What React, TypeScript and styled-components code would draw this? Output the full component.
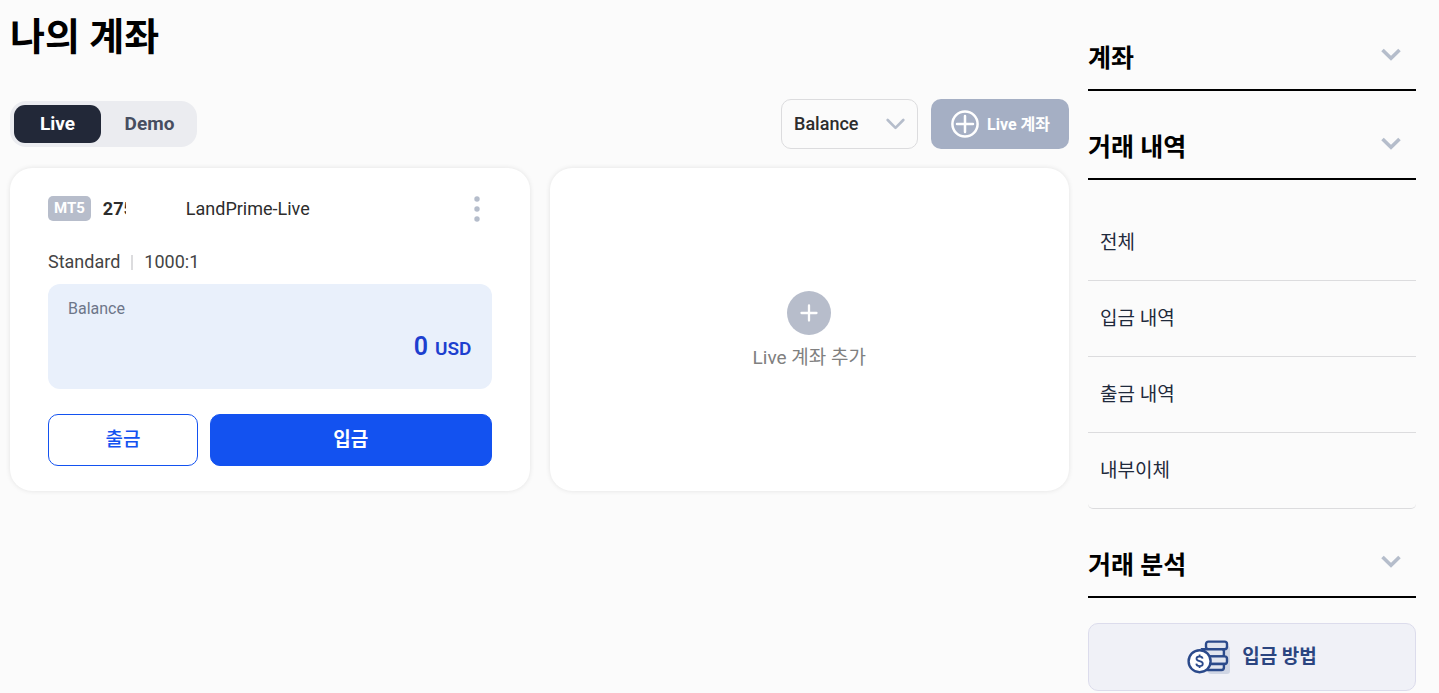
import React, { useState } from "react";
import styled, { createGlobalStyle } from "styled-components";

const GlobalStyle = createGlobalStyle`
  *, *::before, *::after { box-sizing: border-box; }
  body {
    margin: 0;
    background: #fbfbfb;
    color: #2d2d2d;
    font-family: Roboto, "Noto Sans CJK KR", sans-serif;
    font-size: 18px;
    line-height: 24px;
  }
  button, select { font-family: inherit; cursor: pointer; }
  svg { display: block; flex: none; }
`;

const Page = styled.div`
  display: grid;
  grid-template-columns: minmax(0, 1fr) 328px;
  column-gap: 19px;
  padding: 0 23px 0 10px;
`;

const Title = styled.h1`
  margin: 0;
  padding: 9px 0 34px;
  color: #000;
  font-size: 38px;
  font-weight: 700;
  line-height: 56px;
`;

const Toolbar = styled.div`
  display: flex;
  align-items: center;
  gap: 13px;
  margin-bottom: 19px;
`;

const Tabs = styled.div`
  display: flex;
  gap: 5px;
  margin-right: auto;
  padding: 4px;
  border-radius: 16px;
  background: #ebecf0;
`;

const Tab = styled.button<{ $active: boolean }>`
  width: 87px;
  height: 38px;
  padding: 0 0 2px;
  border: 0;
  border-radius: 11px;
  background: ${({ $active }) => ($active ? "#222838" : "transparent")};
  color: ${({ $active }) => ($active ? "#fff" : "#474e60")};
  font-size: 19px;
  font-weight: 700;
`;

const SelectBox = styled.div`
  position: relative;
  width: 137px;

  svg {
    position: absolute;
    top: 19px;
    right: 13px;
    pointer-events: none;
  }
`;

const Select = styled.select`
  width: 100%;
  height: 50px;
  padding: 0 40px 2px 12px;
  border: 1px solid #dcdcde;
  border-radius: 10px;
  background: transparent;
  color: #2d2d2d;
  font-size: 18px;
  font-weight: 500;
  appearance: none;
`;

const CreateButton = styled.button`
  display: flex;
  align-items: center;
  gap: 8px;
  height: 50px;
  padding: 0 19px 0 20px;
  border: 0;
  border-radius: 10px;
  background: #a5afc4;
  color: #fff;
  font-size: 16px;
  font-weight: 700;

  span { padding-bottom: 2px; }
`;

const Cards = styled.div`
  display: grid;
  grid-template-columns: repeat(2, minmax(0, 1fr));
  gap: 20px;
`;

const Card = styled.article`
  padding: 28px 38px 25px;
  border-radius: 22px;
  background: #fff;
  box-shadow: 0 0 5px rgba(0, 0, 0, 0.1);
`;

const AccountRow = styled.div`
  display: flex;
  align-items: center;
  height: 25px;
`;

const Platform = styled.span`
  margin-right: 12px;
  padding: 0 6px;
  border-radius: 5px;
  background: #b7bdcb;
  color: #fff;
  font-size: 15px;
  font-weight: 700;
  line-height: 25px;
`;

const AccountNumber = styled.strong`
  width: 23px;
  margin-right: 60px;
  overflow: hidden;
  font-weight: 700;
`;

const MoreButton = styled.button`
  margin-left: auto;
  padding: 0 10px;
  border: 0;
  background: none;
`;

const Details = styled.div`
  display: flex;
  align-items: center;
  gap: 11px;
  margin: 29px 0 10px;
  color: #444;
`;

const Divider = styled.span`
  width: 2px;
  height: 15px;
  background: #dcdcde;
`;

const BalanceBox = styled.div`
  height: 105px;
  padding: 13px 20px;
  border-radius: 12px;
  background: #e9f0fb;
`;

const BalanceLabel = styled.div`
  color: #6d7689;
  font-size: 16px;
`;

const Amount = styled.div`
  display: flex;
  align-items: baseline;
  justify-content: flex-end;
  gap: 7px;
  margin-top: 10px;
  color: #1d3fcf;
  font-size: 25px;
  font-weight: 600;
  line-height: 32px;

  small { font-size: 19px; }
`;

const Actions = styled.div`
  display: grid;
  grid-template-columns: 150px minmax(0, 1fr);
  gap: 12px;
  margin-top: 25px;
`;

const ActionButton = styled.button<{ $primary?: boolean }>`
  height: 52px;
  padding: 0 0 6px;
  border: 1px solid #1352f0;
  border-radius: 10px;
  background: ${({ $primary }) => ($primary ? "#1352f0" : "#fff")};
  color: ${({ $primary }) => ($primary ? "#fff" : "#1352f0")};
  font-size: 19px;
  font-weight: ${({ $primary }) => ($primary ? 700 : 500)};
`;

const AddCard = styled.button`
  display: flex;
  flex-direction: column;
  align-items: center;
  justify-content: center;
  gap: 10px;
  padding: 2px 0 0;
  border: 0;
  border-radius: 22px;
  background: #fff;
  box-shadow: 0 0 5px rgba(0, 0, 0, 0.1);
  color: #808080;
  font-size: 19px;
  line-height: 26px;
`;

const Sidebar = styled.aside`
  padding: 27px 0 2px;
`;

const SectionHeader = styled.button`
  display: flex;
  align-items: flex-start;
  justify-content: space-between;
  width: 100%;
  height: 64px;
  padding: 14px 15px 0 0;
  border: 0;
  border-bottom: 2px solid #000;
  background: none;
  color: #000;
  font-size: 25px;
  font-weight: 700;
  line-height: 36px;

  svg { margin-top: 4px; }
`;

const Section = styled.section`
  margin-bottom: 25px;
`;

const List = styled.ul`
  margin: 25px 0 0;
  padding: 0;
  list-style: none;
`;

const Item = styled.li`
  border-bottom: 1px solid #dcdcde;

  &:last-child { border-radius: 0 0 5px 5px; }
`;

const ItemLink = styled.a`
  display: block;
  padding: 0 12px;
  color: #1f2a3c;
  font-size: 19px;
  line-height: 75px;
  text-decoration: none;
`;

const MethodLink = styled.a`
  display: flex;
  align-items: center;
  justify-content: center;
  gap: 12px;
  height: 68px;
  border: 1px solid #dcdcec;
  border-radius: 10px;
  background: #f0f1f7;
  color: #2b4580;
  font-size: 19px;
  font-weight: 700;
  text-decoration: none;
`;

const SectionChevron = () => (
  <svg width="20" height="20" viewBox="0 0 20 20" fill="none" stroke="#b5bdcb" strokeWidth="3.6" aria-hidden="true">
    <path d="M1.5 5 10 13.2 18.5 5" />
  </svg>
);

const SelectChevron = () => (
  <svg width="19" height="12" viewBox="0 0 19 12" fill="none" stroke="#b5bdcb" strokeWidth="2.6" strokeLinecap="round" strokeLinejoin="round" aria-hidden="true">
    <path d="M1.7 2 9.5 9.8 17.3 2" />
  </svg>
);

const CirclePlus = () => (
  <svg width="28" height="28" viewBox="0 0 28 28" fill="none" stroke="#fff" strokeWidth="2.5" strokeLinecap="round" aria-hidden="true">
    <circle cx="14" cy="14" r="12.6" />
    <path d="M14 6v16M6 14h16" />
  </svg>
);

const AddIcon = () => (
  <svg width="44" height="44" viewBox="0 0 44 44" aria-hidden="true">
    <circle cx="22" cy="22" r="22" fill="#b7bdcb" />
    <path d="M22 14.5v15M14.5 22h15" stroke="#fff" strokeWidth="2.3" strokeLinecap="round" />
  </svg>
);

const MoreIcon = () => (
  <svg width="10" height="26" viewBox="0 0 10 26" fill="#b5bdcb" aria-hidden="true">
    <circle cx="5" cy="3" r="2.7" />
    <circle cx="5" cy="13" r="2.7" />
    <circle cx="5" cy="23" r="2.7" />
  </svg>
);

const CoinsIcon = () => (
  <svg width="43" height="34" viewBox="0 0 43 34" fill="none" stroke="#2b4a8b" strokeWidth="2.4" aria-hidden="true">
    <rect x="21" y="6" width="22" height="28" rx="3" fill="#d0d6e4" stroke="none" />
    <g fill="#e1e5ef">
      <rect x="19" y="1.6" width="21" height="7.6" rx="2.4" />
      <path d="M15.7 9.2h19.2q2 0 2 2v3.2q0 2-2 2H20.7z" />
      <path d="M20.7 16.4h16.9q2.4 0 2.4 2.4v2.8q0 2.4-2.4 2.4H22.7z" />
      <path d="M22.7 24h14.2v3.6q0 2.4-2.4 2.4H18.7z" />
    </g>
    <circle cx="12.6" cy="21.2" r="11" fill="#fff" />
    <path d="M15.6 18.6c-.3-1.3-1.4-2.1-3-2.1-1.8 0-3.1.8-3.1 2.3 0 3.2 6.3 1.5 6.3 4.9 0 1.5-1.4 2.4-3.2 2.4s-3.1-.9-3.3-2.4M12.6 14.4v2M12.6 26v2" strokeWidth="1.8" />
  </svg>
);

const history = ["전체", "입금 내역", "출금 내역", "내부이체"];

export default function App() {
  const [tab, setTab] = useState("Live");

  return (
    <>
      <GlobalStyle />
      <Page>
        <main>
          <Title>나의 계좌</Title>
          <Toolbar>
            <Tabs>
              {["Live", "Demo"].map((name) => (
                <Tab key={name} type="button" $active={tab === name} aria-pressed={tab === name} onClick={() => setTab(name)}>
                  {name}
                </Tab>
              ))}
            </Tabs>
            <SelectBox>
              <Select aria-label="Balance">
                <option>Balance</option>
              </Select>
              <SelectChevron />
            </SelectBox>
            <CreateButton type="button">
              <CirclePlus />
              <span>Live 계좌</span>
            </CreateButton>
          </Toolbar>
          <Cards>
            <Card>
              <AccountRow>
                <Platform>MT5</Platform>
                <AccountNumber>275</AccountNumber>
                <span>LandPrime-Live</span>
                <MoreButton type="button" aria-haspopup="menu">
                  <MoreIcon />
                </MoreButton>
              </AccountRow>
              <Details>
                <span>Standard</span>
                <Divider />
                <span>1000:1</span>
              </Details>
              <BalanceBox>
                <BalanceLabel>Balance</BalanceLabel>
                <Amount>
                  0 <small>USD</small>
                </Amount>
              </BalanceBox>
              <Actions>
                <ActionButton type="button">출금</ActionButton>
                <ActionButton type="button" $primary>
                  입금
                </ActionButton>
              </Actions>
            </Card>
            <AddCard type="button">
              <AddIcon />
              Live 계좌 추가
            </AddCard>
          </Cards>
        </main>
        <Sidebar>
          <Section>
            <SectionHeader type="button" aria-expanded={false}>
              계좌
              <SectionChevron />
            </SectionHeader>
          </Section>
          <Section>
            <SectionHeader type="button" aria-expanded>
              거래 내역
              <SectionChevron />
            </SectionHeader>
            <List>
              {history.map((label) => (
                <Item key={label}>
                  <ItemLink href="#">{label}</ItemLink>
                </Item>
              ))}
            </List>
          </Section>
          <Section>
            <SectionHeader type="button" aria-expanded={false}>
              거래 분석
              <SectionChevron />
            </SectionHeader>
          </Section>
          <MethodLink href="#">
            <CoinsIcon />
            입금 방법
          </MethodLink>
        </Sidebar>
      </Page>
    </>
  );
}
